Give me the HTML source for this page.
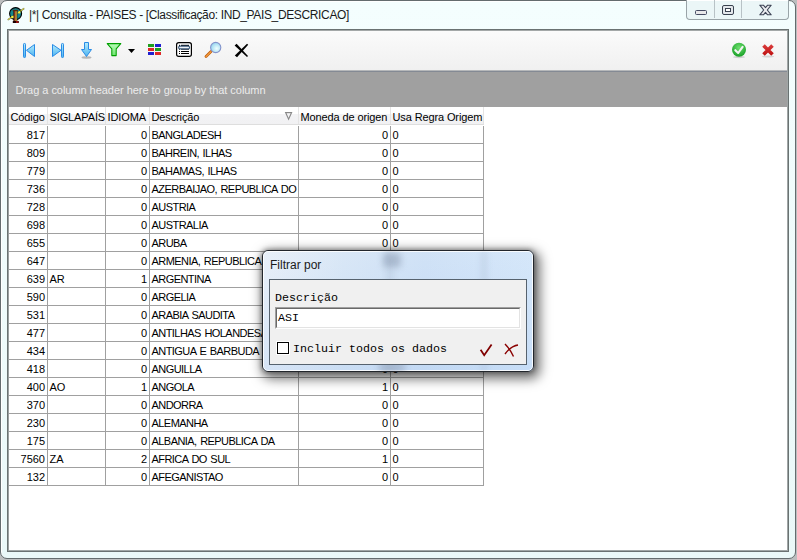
<!DOCTYPE html>
<html><head><meta charset="utf-8">
<style>
*{margin:0;padding:0;box-sizing:border-box}
html,body{width:797px;height:560px;overflow:hidden;background:#bcbebf;font-family:"Liberation Sans",sans-serif}
.abs{position:absolute}
#win{position:absolute;left:0;top:0;width:796px;height:559px;border:1px solid #646c6e;border-radius:7px;background:linear-gradient(#f4fefe,#eaf8f8);box-shadow:inset 1px 1px 0 #fff}
#title{position:absolute;left:29px;top:8px;font-size:12px;color:#1a1a1a;white-space:nowrap;letter-spacing:-0.36px}
#caps{position:absolute;left:686px;top:0;width:103px;height:20px;border:1px solid #9aa4a8;border-top:none;border-radius:0 0 4px 4px;background:#ebf6f7;box-shadow:inset 0 1px 0 #fff}
#client{position:absolute;left:7px;top:29px;width:782px;height:523px;border:1px solid #6a7272;background:#fff}
#client2{position:absolute;left:0;top:0;width:780px;height:521px;border-left:1px solid #9aa0a0;border-top:1px solid #a4a8a8;border-right:1px solid #a0a6a6;border-bottom:1px solid #a0a6a6}
#toolbar{position:absolute;left:9px;top:31px;width:778px;height:39px;background:linear-gradient(#fbfbfb,#f0f0f0)}
#tbline{position:absolute;left:9px;top:70px;width:778px;height:2px;background:linear-gradient(#b6b8ba 50%,#848a94 50%)}
#group{position:absolute;left:9px;top:72px;width:778px;height:35px;background:#a0a0a0}
#grouptxt{position:absolute;left:15.6px;top:84px;font-size:11px;color:#ececec;white-space:nowrap;letter-spacing:-0.04px}
.hdr{position:absolute;top:107px;height:18px;background:linear-gradient(#ffffff 0%,#ffffff 40%,#f3f3f5 41%,#f1f1f3 100%);border-bottom:1px solid #dedede;font-size:11px;color:#000;white-space:nowrap;line-height:21px;padding-left:1.5px;letter-spacing:-0.12px;box-shadow:inset -1px 0 0 #e4e4e4}
.cell{position:absolute;height:18px;font-size:11px;color:#000;white-space:nowrap;line-height:20px;overflow:hidden}
.caps{letter-spacing:-0.55px;word-spacing:1px}
.r{text-align:right;padding-right:2px}
.l{padding-left:1.5px}
.mono{font-family:"Liberation Mono",monospace;font-size:11.67px;color:#000;white-space:nowrap;line-height:14px}
.vl{position:absolute;width:1px;background:#a0a0a0}
.hl{position:absolute;height:1px;background:#a0a0a0}
</style></head><body>
<div id="win"></div>
<!-- app icon -->
<svg class="abs" style="left:7px;top:6px" width="18" height="18" viewBox="0 0 18 18">
  <circle cx="8.6" cy="7.6" r="6" fill="#14868e" stroke="#000" stroke-width="1.1"/>
  <path d="M0.8 13.8 L17.2 2.4" stroke="#000" stroke-width="1.6" fill="none" opacity="0.6"/>
  <path d="M0.8 13.8 L17.2 2.4" stroke="#e8e020" stroke-width="0.9" fill="none"/>
  <rect x="6.8" y="4.6" width="3.2" height="11" fill="#8a3a22" stroke="#1a0800" stroke-width="0.6"/>
  <rect x="8.6" y="4.8" width="0.9" height="10.5" fill="#e8d848"/>
  <rect x="5.8" y="3.8" width="5.2" height="1.4" fill="#5a2612"/>
  <rect x="5.8" y="15" width="6" height="2" fill="#1a0000"/>
  <rect x="9" y="15.3" width="2.4" height="1.4" fill="#c01010"/>
  <circle cx="5.4" cy="11" r="1.2" fill="#f4f040"/>
  <circle cx="12.2" cy="6.4" r="1.2" fill="#f4f040"/>
</svg>
<div id="title">|*| Consulta - PAISES - [Classificação: IND_PAIS_DESCRICAO]</div>
<div id="caps"></div>
<div class="abs" style="left:714px;top:0;width:1px;height:18px;background:#b8c2c6"></div>
<div class="abs" style="left:741px;top:0;width:1px;height:18px;background:#b8c2c6"></div>
<!-- minimize -->
<div class="abs" style="left:695px;top:10px;width:12px;height:5px;border:1.2px solid #444a62;border-radius:1.5px;background:#e8e8ea"></div>
<!-- restore -->
<div class="abs" style="left:722px;top:5px;width:12px;height:10px;border:1px solid #3a4250;border-radius:2px;background:#e4e8ec"></div>
<div class="abs" style="left:725px;top:8px;width:6px;height:4px;border:1px solid #3a4250;background:#fff"></div>
<!-- close -->
<svg class="abs" style="left:756px;top:2px" width="20" height="16" viewBox="756 2 20 16">
  <path d="M759.8 5.2 L763.4 5.2 L765.5 7.7 L767.6 5.2 L771.2 5.2 L767.3 10 L771.2 14.8 L767.6 14.8 L765.5 12.3 L763.4 14.8 L759.8 14.8 L763.7 10 Z" fill="#ecedf0" stroke="#3e4456" stroke-width="1.1" stroke-linejoin="round"/>
</svg>

<div id="client"><div id="client2"></div></div>
<div id="toolbar"></div>
<div id="tbline"></div>
<div id="group"></div>
<div id="grouptxt">Drag a column header here to group by that column</div>

<!-- toolbar icons -->
<svg class="abs" style="left:18px;top:38px" width="240" height="25" viewBox="18 38 240 25">
  <defs>
    <linearGradient id="bl" x1="0" y1="0" x2="0" y2="1"><stop offset="0" stop-color="#b8ecfc"/><stop offset="1" stop-color="#4cb4f0"/></linearGradient>
    <linearGradient id="gr" x1="0" y1="0" x2="0" y2="1"><stop offset="0" stop-color="#b8fcb8"/><stop offset="1" stop-color="#70e470"/></linearGradient>
    <radialGradient id="lens" cx="0.6" cy="0.6" r="0.6"><stop offset="0" stop-color="#f0ffff"/><stop offset="1" stop-color="#98d8f0"/></radialGradient>
  </defs>
  <!-- first -->
  <rect x="23.5" y="43.5" width="2" height="14" rx="0.8" fill="url(#bl)" stroke="#2a8ce6" stroke-width="1"/>
  <path d="M26.5 50.3 L34.5 44.5 L34.5 56.5 Z" fill="url(#bl)" stroke="#2a8ce6" stroke-width="1" stroke-linejoin="round"/>
  <!-- last -->
  <rect x="61.5" y="43.5" width="2" height="14" rx="0.8" fill="url(#bl)" stroke="#2a8ce6" stroke-width="1"/>
  <path d="M61 50.3 L52.5 44.5 L52.5 56.5 Z" fill="url(#bl)" stroke="#2a8ce6" stroke-width="1" stroke-linejoin="round"/>
  <!-- down arrow -->
  <ellipse cx="86.5" cy="57.5" rx="5" ry="1.2" fill="#000" opacity="0.25"/>
  <path d="M84.5 42.5 h4 v7 h3 l-5 7 l-5 -7 h3 z" fill="url(#bl)" stroke="#2a8ce6" stroke-width="1" stroke-linejoin="round"/>
  <!-- funnel -->
  <path d="M107.2 43.6 h13.6 l-4.6 5.2 v6.8 h-4.4 v-6.8 z" fill="url(#gr)" stroke="#00a000" stroke-width="1.05" stroke-linejoin="round"/>
  <path d="M128 49 h7 l-3.5 4 z" fill="#000"/>
  <!-- grid colored -->
  <rect x="148" y="44" width="6" height="3" fill="#20a020"/>
  <rect x="155" y="44" width="6" height="3" fill="#2020d0"/>
  <rect x="148" y="48" width="6" height="3" fill="#e02828"/>
  <rect x="155" y="48" width="6" height="3" fill="#20a020"/>
  <rect x="148" y="52" width="6" height="3" fill="#2020d0"/>
  <rect x="155" y="52" width="6" height="3" fill="#e02828"/>
  <!-- list icon -->
  <rect x="176.6" y="42.6" width="14.8" height="13.8" rx="2.2" fill="#fff" stroke="#000" stroke-width="1.2"/>
  <rect x="181" y="44.8" width="8" height="4.9" fill="#000"/>
  <rect x="179" y="44.8" width="1" height="4.9" fill="#000"/>
  <rect x="178.6" y="46.1" width="11" height="2.8" rx="1.4" fill="#eef2f6" stroke="#3c5a7c" stroke-width="1.1"/>
  <rect x="179" y="51" width="1" height="1" fill="#000"/>
  <rect x="181" y="51" width="8" height="1" fill="#000"/>
  <rect x="179" y="53" width="1" height="1" fill="#000"/>
  <rect x="181" y="53" width="8" height="1" fill="#000"/>
  <!-- magnifier -->
  <path d="M206 56.6 L211 51.6" stroke="#c06010" stroke-width="2.8" stroke-linecap="round"/>
  <path d="M206 56.6 L211 51.6" stroke="#f8a040" stroke-width="1.2" stroke-linecap="round"/>
  <circle cx="215.7" cy="47.5" r="5.1" fill="url(#lens)" stroke="#8494cc" stroke-width="1.1"/>
  <!-- X -->
  <path d="M234.6 45.6 L236.6 43.8 L248 56 L247 57 Z" fill="#000"/>
  <path d="M247 43.8 L248.2 44.8 L237 57.2 L234.8 55.6 Z" fill="#000"/>
</svg>
<!-- right icons -->
<svg class="abs" style="left:728px;top:38px" width="52" height="24" viewBox="728 38 52 24">
  <defs>
    <radialGradient id="gc" cx="0.5" cy="0.35" r="0.7"><stop offset="0" stop-color="#70e070"/><stop offset="1" stop-color="#109a20"/></radialGradient>
    <linearGradient id="rx" x1="0" y1="0" x2="0" y2="1"><stop offset="0" stop-color="#d83838"/><stop offset="1" stop-color="#c01414"/></linearGradient>
  </defs>
  <ellipse cx="739" cy="57" rx="6" ry="1.2" fill="#000" opacity="0.15"/>
  <circle cx="739" cy="49.8" r="7" fill="url(#gc)"/>
  <path d="M735.3 50.2 L738.2 53 L742.6 46.9" stroke="#f4f4f4" stroke-width="2.1" fill="none" stroke-linecap="round" stroke-linejoin="round"/>
  <ellipse cx="768" cy="56.5" rx="6" ry="1" fill="#000" opacity="0.12"/>
  <path d="M763.5 45.5 L772.5 54.5 M772.5 45.5 L763.5 54.5" stroke="url(#rx)" stroke-width="3.6" stroke-linecap="butt"/>
</svg>

<div class="hdr" style="left:9px;width:39px">Código</div>
<div class="hdr" style="left:48px;width:58px">SIGLAPAÍS</div>
<div class="hdr" style="left:106px;width:44px">IDIOMA</div>
<div class="hdr" style="left:150px;width:149px">Descrição</div>
<div class="hdr" style="left:299px;width:92px">Moneda de origen</div>
<div class="hdr" style="left:391px;width:93px">Usa Regra Origem</div>
<svg class="abs" style="left:284px;top:111px" width="10" height="10" viewBox="284 111 10 10"><path d="M285.6 112.6 h6 l-3 6.6 z" fill="none" stroke="#888" stroke-width="1.1"/></svg>
<div class="cell r" style="left:10px;top:125px;width:37px">817</div>
<div class="cell r" style="left:106px;top:125px;width:43px">0</div>
<div class="cell caps l" style="left:150px;top:125px;width:148px">BANGLADESH</div>
<div class="cell r" style="left:299px;top:125px;width:91px">0</div>
<div class="cell l" style="left:391px;top:125px;width:92px">0</div>
<div class="cell r" style="left:10px;top:143px;width:37px">809</div>
<div class="cell r" style="left:106px;top:143px;width:43px">0</div>
<div class="cell caps l" style="left:150px;top:143px;width:148px">BAHREIN, ILHAS</div>
<div class="cell r" style="left:299px;top:143px;width:91px">0</div>
<div class="cell l" style="left:391px;top:143px;width:92px">0</div>
<div class="cell r" style="left:10px;top:161px;width:37px">779</div>
<div class="cell r" style="left:106px;top:161px;width:43px">0</div>
<div class="cell caps l" style="left:150px;top:161px;width:148px">BAHAMAS, ILHAS</div>
<div class="cell r" style="left:299px;top:161px;width:91px">0</div>
<div class="cell l" style="left:391px;top:161px;width:92px">0</div>
<div class="cell r" style="left:10px;top:179px;width:37px">736</div>
<div class="cell r" style="left:106px;top:179px;width:43px">0</div>
<div class="cell caps l" style="left:150px;top:179px;width:148px">AZERBAIJAO, REPUBLICA DO</div>
<div class="cell r" style="left:299px;top:179px;width:91px">0</div>
<div class="cell l" style="left:391px;top:179px;width:92px">0</div>
<div class="cell r" style="left:10px;top:197px;width:37px">728</div>
<div class="cell r" style="left:106px;top:197px;width:43px">0</div>
<div class="cell caps l" style="left:150px;top:197px;width:148px">AUSTRIA</div>
<div class="cell r" style="left:299px;top:197px;width:91px">0</div>
<div class="cell l" style="left:391px;top:197px;width:92px">0</div>
<div class="cell r" style="left:10px;top:215px;width:37px">698</div>
<div class="cell r" style="left:106px;top:215px;width:43px">0</div>
<div class="cell caps l" style="left:150px;top:215px;width:148px">AUSTRALIA</div>
<div class="cell r" style="left:299px;top:215px;width:91px">0</div>
<div class="cell l" style="left:391px;top:215px;width:92px">0</div>
<div class="cell r" style="left:10px;top:233px;width:37px">655</div>
<div class="cell r" style="left:106px;top:233px;width:43px">0</div>
<div class="cell caps l" style="left:150px;top:233px;width:148px">ARUBA</div>
<div class="cell r" style="left:299px;top:233px;width:91px">0</div>
<div class="cell l" style="left:391px;top:233px;width:92px">0</div>
<div class="cell r" style="left:10px;top:251px;width:37px">647</div>
<div class="cell r" style="left:106px;top:251px;width:43px">0</div>
<div class="cell caps l" style="left:150px;top:251px;width:148px">ARMENIA, REPUBLICA DA</div>
<div class="cell r" style="left:299px;top:251px;width:91px">0</div>
<div class="cell l" style="left:391px;top:251px;width:92px">0</div>
<div class="cell r" style="left:10px;top:269px;width:37px">639</div>
<div class="cell l" style="left:48px;top:269px;width:57px">AR</div>
<div class="cell r" style="left:106px;top:269px;width:43px">1</div>
<div class="cell caps l" style="left:150px;top:269px;width:148px">ARGENTINA</div>
<div class="cell r" style="left:299px;top:269px;width:91px">1</div>
<div class="cell l" style="left:391px;top:269px;width:92px">0</div>
<div class="cell r" style="left:10px;top:287px;width:37px">590</div>
<div class="cell r" style="left:106px;top:287px;width:43px">0</div>
<div class="cell caps l" style="left:150px;top:287px;width:148px">ARGELIA</div>
<div class="cell r" style="left:299px;top:287px;width:91px">0</div>
<div class="cell l" style="left:391px;top:287px;width:92px">0</div>
<div class="cell r" style="left:10px;top:305px;width:37px">531</div>
<div class="cell r" style="left:106px;top:305px;width:43px">0</div>
<div class="cell caps l" style="left:150px;top:305px;width:148px">ARABIA SAUDITA</div>
<div class="cell r" style="left:299px;top:305px;width:91px">0</div>
<div class="cell l" style="left:391px;top:305px;width:92px">0</div>
<div class="cell r" style="left:10px;top:323px;width:37px">477</div>
<div class="cell r" style="left:106px;top:323px;width:43px">0</div>
<div class="cell caps l" style="left:150px;top:323px;width:148px">ANTILHAS HOLANDESAS</div>
<div class="cell r" style="left:299px;top:323px;width:91px">0</div>
<div class="cell l" style="left:391px;top:323px;width:92px">0</div>
<div class="cell r" style="left:10px;top:341px;width:37px">434</div>
<div class="cell r" style="left:106px;top:341px;width:43px">0</div>
<div class="cell caps l" style="left:150px;top:341px;width:148px">ANTIGUA E BARBUDA</div>
<div class="cell r" style="left:299px;top:341px;width:91px">0</div>
<div class="cell l" style="left:391px;top:341px;width:92px">0</div>
<div class="cell r" style="left:10px;top:359px;width:37px">418</div>
<div class="cell r" style="left:106px;top:359px;width:43px">0</div>
<div class="cell caps l" style="left:150px;top:359px;width:148px">ANGUILLA</div>
<div class="cell r" style="left:299px;top:359px;width:91px">0</div>
<div class="cell l" style="left:391px;top:359px;width:92px">0</div>
<div class="cell r" style="left:10px;top:377px;width:37px">400</div>
<div class="cell l" style="left:48px;top:377px;width:57px">AO</div>
<div class="cell r" style="left:106px;top:377px;width:43px">1</div>
<div class="cell caps l" style="left:150px;top:377px;width:148px">ANGOLA</div>
<div class="cell r" style="left:299px;top:377px;width:91px">1</div>
<div class="cell l" style="left:391px;top:377px;width:92px">0</div>
<div class="cell r" style="left:10px;top:395px;width:37px">370</div>
<div class="cell r" style="left:106px;top:395px;width:43px">0</div>
<div class="cell caps l" style="left:150px;top:395px;width:148px">ANDORRA</div>
<div class="cell r" style="left:299px;top:395px;width:91px">0</div>
<div class="cell l" style="left:391px;top:395px;width:92px">0</div>
<div class="cell r" style="left:10px;top:413px;width:37px">230</div>
<div class="cell r" style="left:106px;top:413px;width:43px">0</div>
<div class="cell caps l" style="left:150px;top:413px;width:148px">ALEMANHA</div>
<div class="cell r" style="left:299px;top:413px;width:91px">0</div>
<div class="cell l" style="left:391px;top:413px;width:92px">0</div>
<div class="cell r" style="left:10px;top:431px;width:37px">175</div>
<div class="cell r" style="left:106px;top:431px;width:43px">0</div>
<div class="cell caps l" style="left:150px;top:431px;width:148px">ALBANIA, REPUBLICA DA</div>
<div class="cell r" style="left:299px;top:431px;width:91px">0</div>
<div class="cell l" style="left:391px;top:431px;width:92px">0</div>
<div class="cell r" style="left:10px;top:449px;width:37px">7560</div>
<div class="cell l" style="left:48px;top:449px;width:57px">ZA</div>
<div class="cell r" style="left:106px;top:449px;width:43px">2</div>
<div class="cell caps l" style="left:150px;top:449px;width:148px">AFRICA DO SUL</div>
<div class="cell r" style="left:299px;top:449px;width:91px">1</div>
<div class="cell l" style="left:391px;top:449px;width:92px">0</div>
<div class="cell r" style="left:10px;top:467px;width:37px">132</div>
<div class="cell r" style="left:106px;top:467px;width:43px">0</div>
<div class="cell caps l" style="left:150px;top:467px;width:148px">AFEGANISTAO</div>
<div class="cell r" style="left:299px;top:467px;width:91px">0</div>
<div class="cell l" style="left:391px;top:467px;width:92px">0</div>
<div class="hl" style="left:9px;top:143px;width:475px"></div>
<div class="hl" style="left:9px;top:161px;width:475px"></div>
<div class="hl" style="left:9px;top:179px;width:475px"></div>
<div class="hl" style="left:9px;top:197px;width:475px"></div>
<div class="hl" style="left:9px;top:215px;width:475px"></div>
<div class="hl" style="left:9px;top:233px;width:475px"></div>
<div class="hl" style="left:9px;top:251px;width:475px"></div>
<div class="hl" style="left:9px;top:269px;width:475px"></div>
<div class="hl" style="left:9px;top:287px;width:475px"></div>
<div class="hl" style="left:9px;top:305px;width:475px"></div>
<div class="hl" style="left:9px;top:323px;width:475px"></div>
<div class="hl" style="left:9px;top:341px;width:475px"></div>
<div class="hl" style="left:9px;top:359px;width:475px"></div>
<div class="hl" style="left:9px;top:377px;width:475px"></div>
<div class="hl" style="left:9px;top:395px;width:475px"></div>
<div class="hl" style="left:9px;top:413px;width:475px"></div>
<div class="hl" style="left:9px;top:431px;width:475px"></div>
<div class="hl" style="left:9px;top:449px;width:475px"></div>
<div class="hl" style="left:9px;top:467px;width:475px"></div>
<div class="hl" style="left:9px;top:485px;width:475px"></div>
<div class="vl" style="left:47px;top:126px;height:360px"></div>
<div class="vl" style="left:105px;top:126px;height:360px"></div>
<div class="vl" style="left:149px;top:126px;height:360px"></div>
<div class="vl" style="left:298px;top:126px;height:360px"></div>
<div class="vl" style="left:390px;top:126px;height:360px"></div>
<div class="vl" style="left:483px;top:126px;height:360px"></div>
<div class="abs" style="left:262px;top:250px;width:272px;height:122px;border-radius:6px;box-shadow:3px 4px 12px 3px rgba(0,0,0,0.55), 0 0 4px 1px rgba(0,0,0,0.3)"></div>
<div class="abs" style="left:262px;top:250px;width:272px;height:122px;border:1px solid #22262c;border-radius:6px;overflow:hidden;background:linear-gradient(rgba(255,255,255,0.12),rgba(170,200,240,0.25)),linear-gradient(90deg,#e6eef8 0%,#d4e4f5 30%,#cadef5 60%,#d0e4f9 100%)">
  <div class="abs" style="left:0;top:0;right:0;bottom:0;border:1px solid rgba(255,255,255,0.85);border-radius:5px"></div>
  <div class="abs" style="left:120px;top:2px;width:18px;height:14px;background:#8898b0;filter:blur(3px);opacity:0.5"></div>
  <div class="abs" style="left:124px;top:0px;width:6px;height:121px;background:#8898b0;filter:blur(3px);opacity:0.2"></div>
  <div class="abs" style="left:116px;top:110px;width:26px;height:12px;background:#8898b0;filter:blur(3px);opacity:0.45"></div>
  <div class="abs" style="left:219px;top:0px;width:4px;height:121px;background:#8898b0;filter:blur(3px);opacity:0.25"></div>
</div>
<div class="abs" style="left:270px;top:258px;font-size:12px;color:#1a1a1a;letter-spacing:0;white-space:nowrap">Filtrar por</div>
<div class="abs" style="left:269px;top:279px;width:258px;height:86px;border:1px solid #56626e;background:#f0f0f0"></div>
<div class="abs mono" style="left:275px;top:291px">Descrição</div>
<div class="abs" style="left:275px;top:307px;width:246px;height:22px;border-top:1px solid #a0a0a0;border-left:1px solid #a0a0a0;border-right:1px solid #fff;border-bottom:1px solid #fff">
  <div class="abs" style="left:0;top:0;width:244px;height:20px;border-top:1px solid #696969;border-left:1px solid #696969;border-right:1px solid #e3e3e3;border-bottom:1px solid #e3e3e3;background:#fff"></div>
</div>
<div class="abs mono" style="left:278px;top:311px">ASI</div>
<div class="abs" style="left:277px;top:342px;width:12px;height:12px;border:1px solid #000;background:#fff;box-shadow:0 0 0 1px #fff"></div>
<div class="abs mono" style="left:293px;top:342px">Incluir todos os dados</div>
<svg class="abs" style="left:476px;top:340px" width="48" height="20" viewBox="476 340 48 20">
  <path d="M480.6 349.8 L484.2 355.2 L491.6 344.6" stroke="#800000" stroke-width="1.8" fill="none" stroke-linejoin="miter"/>
  <path d="M505 344 Q510 349 513.5 356.5" stroke="#8a0000" stroke-width="1.4" fill="none"/>
  <path d="M505 354 Q511 346 518 345" stroke="#8a0000" stroke-width="1.4" fill="none"/>
</svg>

</body></html>
